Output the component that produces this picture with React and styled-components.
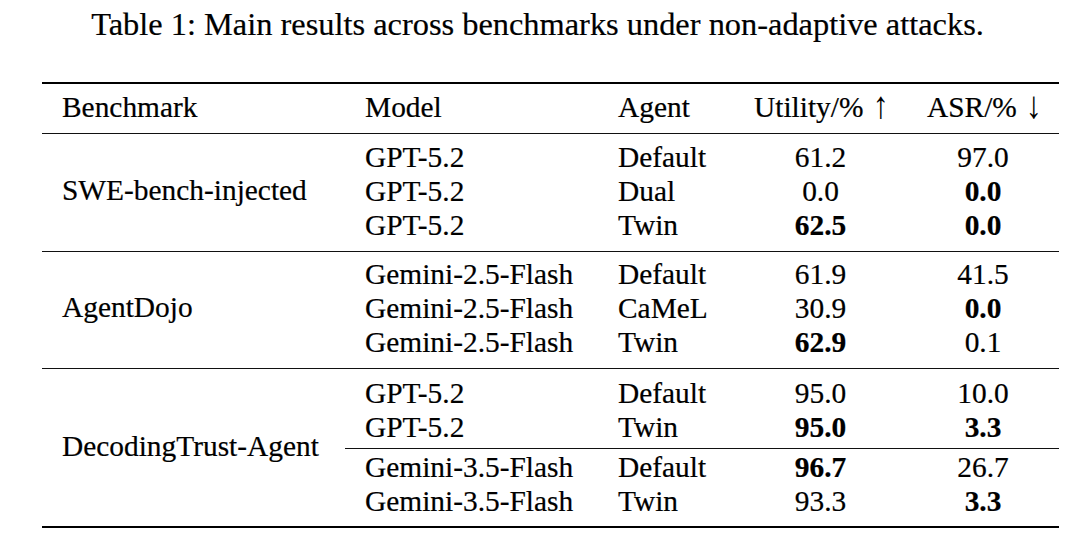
import React from "react";
import styled, { createGlobalStyle } from "styled-components";

const GlobalStyle = createGlobalStyle`
    html, body {
        margin: 0;
        padding: 0;
        background: #fff;
    }
    body {
        font-family: "Liberation Serif", "Times New Roman", serif;
        color: #000;
        -webkit-text-stroke: 0.2px #000;
    }
`;

const groups = [
    {
        name: "SWE-bench-injected",
        pt: 6, pb: 9,
        blocks: [[
            ["GPT-5.2", "Default", "61.2", "97.0"],
            ["GPT-5.2", "Dual", "0.0", "*0.0"],
            ["GPT-5.2", "Twin", "*62.5", "*0.0"],
        ]],
    },
    {
        name: "AgentDojo",
        pt: 5, pb: 9,
        blocks: [[
            ["Gemini-2.5-Flash", "Default", "61.9", "41.5"],
            ["Gemini-2.5-Flash", "CaMeL", "30.9", "*0.0"],
            ["Gemini-2.5-Flash", "Twin", "*62.9", "0.1"],
        ]],
    },
    {
        name: "DecodingTrust-Agent",
        pt: 7, pb: 8,
        blocks: [
            [
                ["GPT-5.2", "Default", "95.0", "10.0"],
                ["GPT-5.2", "Twin", "*95.0", "*3.3"],
            ],
            [
                ["Gemini-3.5-Flash", "Default", "*96.7", "26.7"],
                ["Gemini-3.5-Flash", "Twin", "93.3", "*3.3"],
            ],
        ],
    },
];

// values starting with * are the bold ones
const Num = ({ v }) => v.startsWith("*") ? <Cell $center $bold>{v.slice(1)}</Cell> : <Cell $center>{v}</Cell>;

export default function App() {
    return (
        <Page>
            <GlobalStyle />
            <Caption>Table 1: Main results across benchmarks under non-adaptive attacks.</Caption>
            <Table>
                <HeadRow>
                    <Cell>Benchmark</Cell>
                    <Cell>Model</Cell>
                    <Cell>Agent</Cell>
                    <Cell $center>Utility/% <Arrow>↑</Arrow></Cell>
                    <Cell $center>ASR/% <Arrow>↓</Arrow></Cell>
                </HeadRow>
                {groups.map((g) => (
                    <Group key={g.name} $pt={g.pt} $pb={g.pb}>
                        <Bench>{g.name}</Bench>
                        <Blocks>
                            {g.blocks.map((rows, i) => (
                                <Block key={i} $cmid={i > 0}>
                                    {rows.map((r, j) => (
                                        <Row key={j}>
                                            <Cell>{r[0]}</Cell>
                                            <Cell>{r[1]}</Cell>
                                            <Num v={r[2]} />
                                            <Num v={r[3]} />
                                        </Row>
                                    ))}
                                </Block>
                            ))}
                        </Blocks>
                    </Group>
                ))}
            </Table>
        </Page>
    );
}

const Page = styled.div`
    width: 1080px;
    height: 543px;
    overflow: hidden;
    padding-top: 4px;
    box-sizing: border-box;
`;

const Caption = styled.div`
    width: 1075px;
    text-align: center;
    font-size: 32.4px;
    line-height: 40px;
    white-space: nowrap;
`;

const Table = styled.div`
    margin: 38px 0 0 42px;
    width: 1017px;
    border-top: 2px solid #000;
    border-bottom: 2px solid #000;
    font-size: 29.4px;
    line-height: 34px;
`;

const HeadRow = styled.div`
    display: grid;
    grid-template-columns: 303px 253px 136px 173px 152px;
    padding: 6px 0 9px;
`;

const Arrow = styled.span`
    display: inline-block;
    font-size: 1.3em;
    line-height: 0;
    transform: scaleX(0.85) translateY(1px);
    -webkit-text-stroke: 0;
`;

const Group = styled.div`
    display: grid;
    grid-template-columns: 303px 1fr;
    border-top: 1px solid #111;
    padding: ${(p) => p.$pt}px 0 ${(p) => p.$pb}px;
`;

const Bench = styled.div`
    align-self: center;
    padding-left: 20px;
    padding-bottom: 2px;
    white-space: nowrap;
`;

const Blocks = styled.div`
    display: flex;
    flex-direction: column;
`;

const Block = styled.div`
    ${(p) => p.$cmid && `
        margin-top: 4px;
        padding-top: 1px;
        border-top: 1px solid #111;
    `}
`;

const Row = styled.div`
    display: grid;
    grid-template-columns: 253px 136px 173px 152px;
`;

const Cell = styled.div`
    padding: 0 20px;
    white-space: nowrap;
    text-align: ${(p) => (p.$center ? "center" : "left")};
    font-weight: ${(p) => (p.$bold ? 700 : 400)};
`;
